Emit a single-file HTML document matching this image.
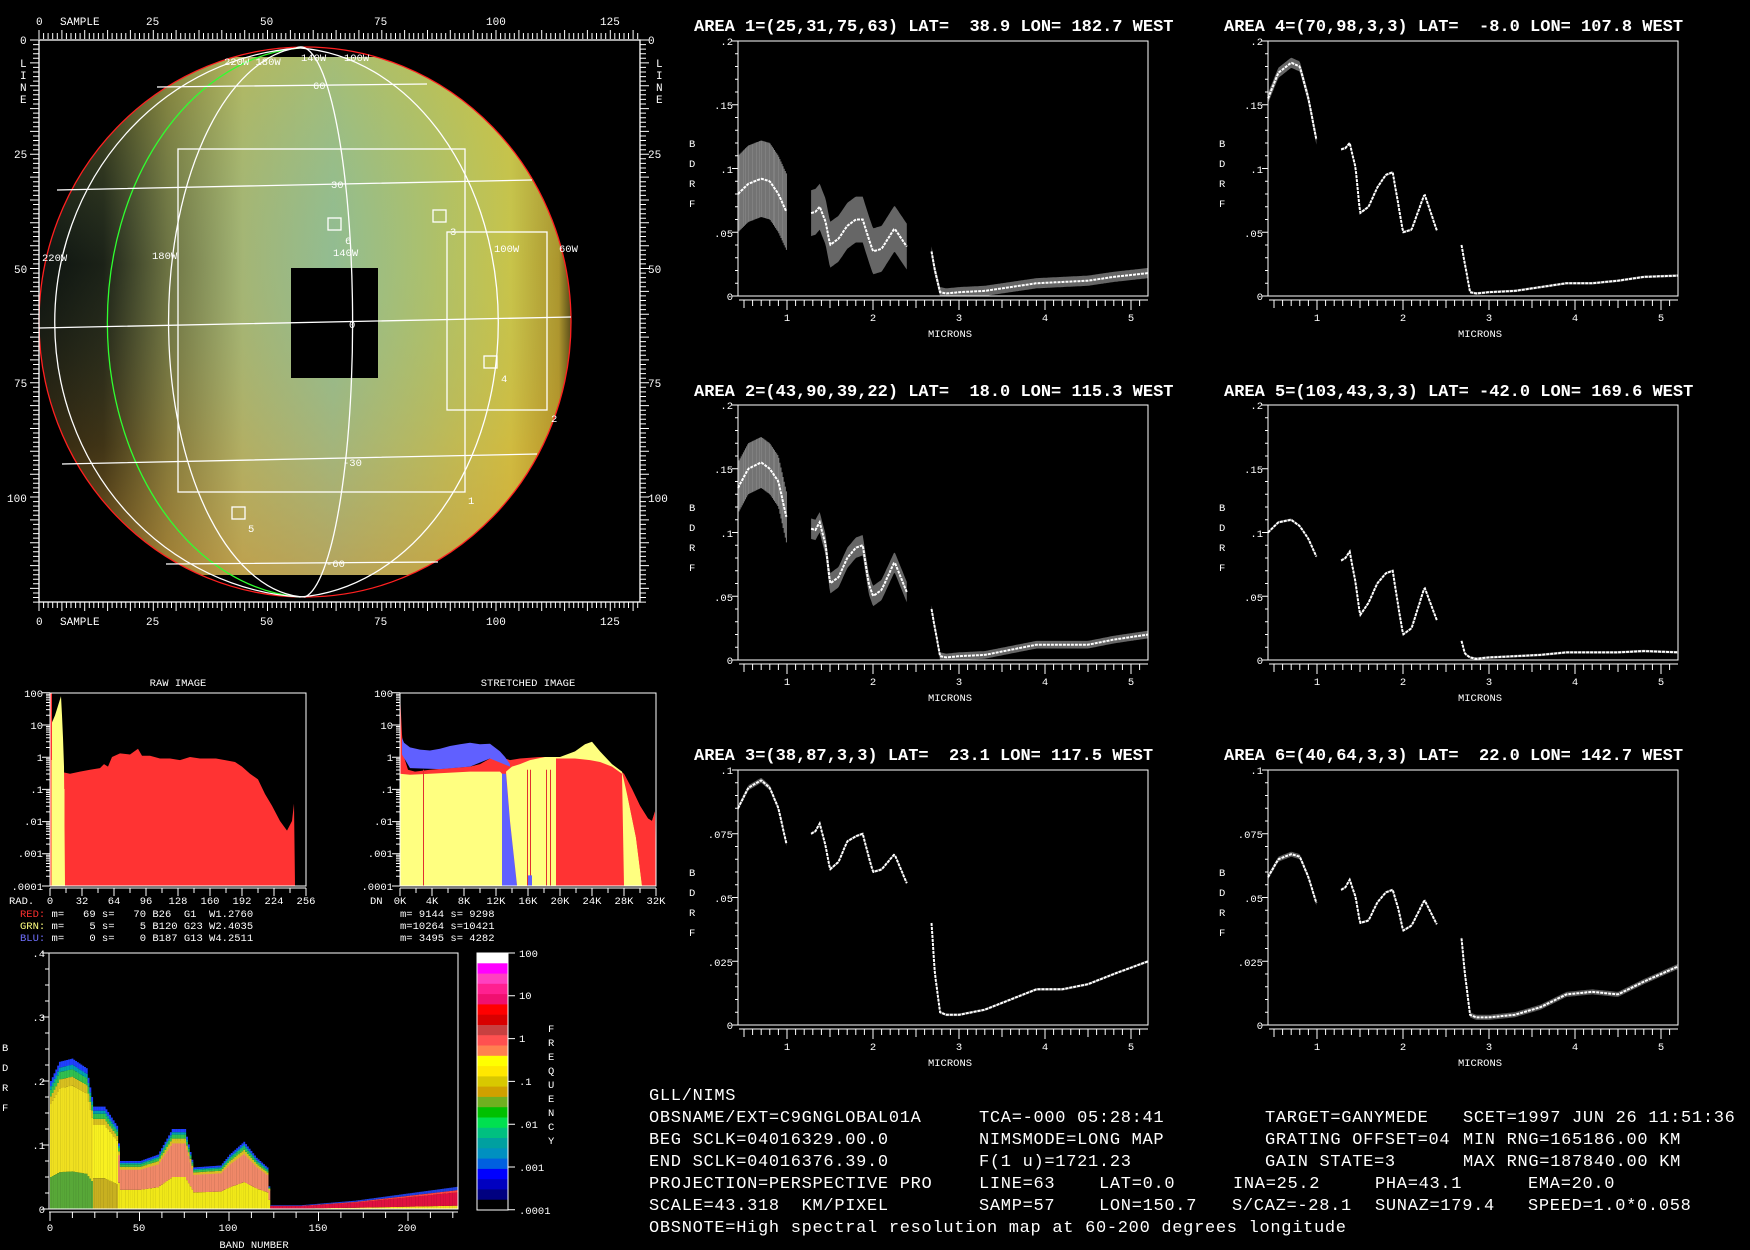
<!DOCTYPE html>
<html><head><meta charset="utf-8"><style>
html,body{margin:0;padding:0;background:#000;width:1750px;height:1250px;overflow:hidden}
svg{display:block}
text{font-family:"Liberation Mono",monospace;fill:#fff;white-space:pre}
.s{font-size:10.5px}
.m{font-size:11px}
.t{font-size:17px;font-weight:bold}
.b{font-size:17px;letter-spacing:0.7px}
</style></head><body>
<svg id="sv" width="1750" height="1250" viewBox="0 0 1750 1250" xmlns="http://www.w3.org/2000/svg">
<defs>
<linearGradient id="ph" gradientUnits="userSpaceOnUse" x1="39" y1="0" x2="575" y2="0">
<stop offset="0" stop-color="#000"/>
<stop offset="0.12" stop-color="#101008"/>
<stop offset="0.24" stop-color="#6a6a38"/>
<stop offset="0.38" stop-color="#a8b470"/>
<stop offset="0.55" stop-color="#94bc90"/>
<stop offset="0.72" stop-color="#b0c068"/>
<stop offset="0.88" stop-color="#d0c440"/>
<stop offset="0.97" stop-color="#b09020"/>
<stop offset="1" stop-color="#302000"/>
</linearGradient>
<linearGradient id="pv" gradientUnits="userSpaceOnUse" x1="0" y1="57" x2="0" y2="575">
<stop offset="0" stop-color="#c8c040" stop-opacity="0.35"/>
<stop offset="0.4" stop-color="#80c0a0" stop-opacity="0.1"/>
<stop offset="0.75" stop-color="#d0a040" stop-opacity="0.25"/>
<stop offset="1" stop-color="#d09030" stop-opacity="0.55"/>
</linearGradient>
<clipPath id="pc"><ellipse cx="305" cy="322" rx="266" ry="275"/></clipPath>
</defs>
<rect width="1750" height="1250" fill="#000"/>

<g clip-path="url(#pc)">
<rect x="39" y="57" width="540" height="518" fill="url(#ph)"/>
<rect x="39" y="57" width="540" height="518" fill="url(#pv)"/>
</g>
<rect x="291" y="268" width="87" height="110" fill="#000"/>
<g fill="none" stroke-width="1.3">
<ellipse cx="305" cy="322" rx="266" ry="275" stroke="#ff2020"/>
<path d="M300 48 A205 275 0 0 0 300 597" stroke="#30ff30"/>
<path d="M300 48 A261 275 0 0 0 300 597" stroke="#fff"/>
<path d="M296 48 A139 275 0 0 0 305 597" stroke="#fff"/>
<path d="M296 48 A52 275 0 0 1 305 597" stroke="#fff"/>
<path d="M300 48 A211 275 0 0 1 300 597" stroke="#fff"/>
<path d="M157 87 L427 84 M57 190 L532 180 M39 328 L571 317 M62 464 L537 454 M166 564 L438 562" stroke="#fff"/>
<rect x="178" y="149" width="287" height="343" stroke="#fff"/>
<rect x="447" y="232" width="100" height="178" stroke="#fff"/>
<rect x="328" y="218" width="13" height="12" stroke="#fff"/>
<rect x="433" y="210" width="13" height="12" stroke="#fff"/>
<rect x="484" y="356" width="13" height="12" stroke="#fff"/>
<rect x="232" y="507" width="13" height="12" stroke="#fff"/>
<rect x="39" y="40" width="601" height="562" stroke="#fff"/>
</g>
<g class="s">
<text x="224" y="65">220W 180W</text><text x="301" y="61">140W</text><text x="344" y="61">100W</text>
<text x="313" y="89">60</text><text x="331" y="188">30</text><text x="345" y="244">6</text>
<text x="333" y="256">140W</text><text x="349" y="328">0</text><text x="450" y="235">3</text>
<text x="494" y="252">100W</text><text x="559" y="252">60W</text><text x="42" y="261">220W</text>
<text x="152" y="259">180W</text><text x="501" y="382">4</text><text x="551" y="422">2</text>
<text x="343" y="466">-30</text><text x="468" y="504">1</text><text x="248" y="532">5</text><text x="326" y="567">-60</text>
</g>
<g class="m">
<text x="36" y="25">0</text><text x="60" y="25">SAMPLE</text><text x="146" y="25">25</text><text x="260" y="25">50</text><text x="374" y="25">75</text><text x="486" y="25">100</text><text x="600" y="25">125</text>
<text x="36" y="625">0</text><text x="60" y="625">SAMPLE</text><text x="146" y="625">25</text><text x="260" y="625">50</text><text x="374" y="625">75</text><text x="486" y="625">100</text><text x="600" y="625">125</text>
<text x="20" y="44">0</text><text x="14" y="158">25</text><text x="14" y="273">50</text><text x="14" y="387">75</text><text x="7" y="502">100</text>
<text x="20" y="67">L</text><text x="20" y="79">I</text><text x="20" y="91">N</text><text x="20" y="103">E</text>
<text x="648" y="44">0</text><text x="648" y="158">25</text><text x="648" y="273">50</text><text x="648" y="387">75</text><text x="648" y="502">100</text>
<text x="656" y="67">L</text><text x="656" y="79">I</text><text x="656" y="91">N</text><text x="656" y="103">E</text>
</g>
<g id="maxis" stroke="#fff" stroke-width="1"></g>

<g id="hist"></g>
<g class="s">
<text x="178" y="686" text-anchor="middle">RAW IMAGE</text>
<text x="528" y="686" text-anchor="middle">STRETCHED IMAGE</text>
<text x="43" y="697" text-anchor="end">100</text><text x="43" y="729" text-anchor="end">10</text><text x="43" y="761" text-anchor="end">1</text><text x="43" y="793" text-anchor="end">.1</text><text x="43" y="825" text-anchor="end">.01</text><text x="43" y="857" text-anchor="end">.001</text><text x="43" y="890" text-anchor="end">.0001</text>
<text x="393" y="697" text-anchor="end">100</text><text x="393" y="729" text-anchor="end">10</text><text x="393" y="761" text-anchor="end">1</text><text x="393" y="793" text-anchor="end">.1</text><text x="393" y="825" text-anchor="end">.01</text><text x="393" y="857" text-anchor="end">.001</text><text x="393" y="890" text-anchor="end">.0001</text>
<text x="9" y="904">RAD.</text>
<text x="50" y="904" text-anchor="middle">0</text><text x="82" y="904" text-anchor="middle">32</text><text x="114" y="904" text-anchor="middle">64</text><text x="146" y="904" text-anchor="middle">96</text><text x="178" y="904" text-anchor="middle">128</text><text x="210" y="904" text-anchor="middle">160</text><text x="242" y="904" text-anchor="middle">192</text><text x="274" y="904" text-anchor="middle">224</text><text x="306" y="904" text-anchor="middle">256</text>
<text x="370" y="904">DN</text>
<text x="400" y="904" text-anchor="middle">0K</text><text x="432" y="904" text-anchor="middle">4K</text><text x="464" y="904" text-anchor="middle">8K</text><text x="496" y="904" text-anchor="middle">12K</text><text x="528" y="904" text-anchor="middle">16K</text><text x="560" y="904" text-anchor="middle">20K</text><text x="592" y="904" text-anchor="middle">24K</text><text x="624" y="904" text-anchor="middle">28K</text><text x="656" y="904" text-anchor="middle">32K</text>
<text x="20" y="917"><tspan fill="#ff3030">RED:</tspan> m=   69 s=   70 B26  G1  W1.2760</text>
<text x="20" y="929"><tspan fill="#ffff80">GRN:</tspan> m=    5 s=    5 B120 G23 W2.4035</text>
<text x="20" y="941"><tspan fill="#7070ff">BLU:</tspan> m=    0 s=    0 B187 G13 W4.2511</text>
<text x="400" y="917">m= 9144 s= 9298</text>
<text x="400" y="929">m=10264 s=10421</text>
<text x="400" y="941">m= 3495 s= 4282</text>
</g>

<g id="simg"></g>
<g id="cbar"></g>
<g class="s">
<text x="45" y="957" text-anchor="end">.4</text><text x="45" y="1021" text-anchor="end">.3</text><text x="45" y="1085" text-anchor="end">.2</text><text x="45" y="1149" text-anchor="end">.1</text><text x="45" y="1213" text-anchor="end">0</text>
<text x="2" y="1051">B</text><text x="2" y="1071">D</text><text x="2" y="1091">R</text><text x="2" y="1111">F</text>
<text x="50" y="1231" text-anchor="middle">0</text><text x="139" y="1231" text-anchor="middle">50</text><text x="228" y="1231" text-anchor="middle">100</text><text x="318" y="1231" text-anchor="middle">150</text><text x="407" y="1231" text-anchor="middle">200</text>
<text x="254" y="1248" text-anchor="middle">BAND NUMBER</text>
<text x="519" y="957">100</text><text x="519" y="999">10</text><text x="519" y="1042">1</text><text x="519" y="1085">.1</text><text x="519" y="1128">.01</text><text x="519" y="1171">.001</text><text x="519" y="1214">.0001</text>
<text x="548" y="1032">F</text><text x="548" y="1046">R</text><text x="548" y="1060">E</text><text x="548" y="1074">Q</text><text x="548" y="1088">U</text><text x="548" y="1102">E</text><text x="548" y="1116">N</text><text x="548" y="1130">C</text><text x="548" y="1144">Y</text>
</g>

<g id="spec"></g>
<g class="t">
<text x="694" y="31">AREA 1=(25,31,75,63) LAT=  38.9 LON= 182.7 WEST</text>
<text x="1224" y="31">AREA 4=(70,98,3,3) LAT=  -8.0 LON= 107.8 WEST</text>
<text x="694" y="396">AREA 2=(43,90,39,22) LAT=  18.0 LON= 115.3 WEST</text>
<text x="1224" y="396">AREA 5=(103,43,3,3) LAT= -42.0 LON= 169.6 WEST</text>
<text x="694" y="760">AREA 3=(38,87,3,3) LAT=  23.1 LON= 117.5 WEST</text>
<text x="1224" y="760">AREA 6=(40,64,3,3) LAT=  22.0 LON= 142.7 WEST</text>
</g>
<g class="s">
<text x="733" y="45" text-anchor="end">.2</text><text x="733" y="109" text-anchor="end">.15</text><text x="733" y="173" text-anchor="end">.1</text><text x="733" y="237" text-anchor="end">.05</text><text x="733" y="300" text-anchor="end">0</text>
<text x="689" y="147">B</text><text x="689" y="167">D</text><text x="689" y="187">R</text><text x="689" y="207">F</text>
<text x="787" y="321" text-anchor="middle">1</text><text x="873" y="321" text-anchor="middle">2</text><text x="959" y="321" text-anchor="middle">3</text><text x="1045" y="321" text-anchor="middle">4</text><text x="1131" y="321" text-anchor="middle">5</text>
<text x="950" y="337" text-anchor="middle">MICRONS</text>
<text x="1263" y="45" text-anchor="end">.2</text><text x="1263" y="109" text-anchor="end">.15</text><text x="1263" y="173" text-anchor="end">.1</text><text x="1263" y="237" text-anchor="end">.05</text><text x="1263" y="300" text-anchor="end">0</text>
<text x="1219" y="147">B</text><text x="1219" y="167">D</text><text x="1219" y="187">R</text><text x="1219" y="207">F</text>
<text x="1317" y="321" text-anchor="middle">1</text><text x="1403" y="321" text-anchor="middle">2</text><text x="1489" y="321" text-anchor="middle">3</text><text x="1575" y="321" text-anchor="middle">4</text><text x="1661" y="321" text-anchor="middle">5</text>
<text x="1480" y="337" text-anchor="middle">MICRONS</text>
<text x="733" y="409" text-anchor="end">.2</text><text x="733" y="473" text-anchor="end">.15</text><text x="733" y="537" text-anchor="end">.1</text><text x="733" y="601" text-anchor="end">.05</text><text x="733" y="664" text-anchor="end">0</text>
<text x="689" y="511">B</text><text x="689" y="531">D</text><text x="689" y="551">R</text><text x="689" y="571">F</text>
<text x="787" y="685" text-anchor="middle">1</text><text x="873" y="685" text-anchor="middle">2</text><text x="959" y="685" text-anchor="middle">3</text><text x="1045" y="685" text-anchor="middle">4</text><text x="1131" y="685" text-anchor="middle">5</text>
<text x="950" y="701" text-anchor="middle">MICRONS</text>
<text x="1263" y="409" text-anchor="end">.2</text><text x="1263" y="473" text-anchor="end">.15</text><text x="1263" y="537" text-anchor="end">.1</text><text x="1263" y="601" text-anchor="end">.05</text><text x="1263" y="664" text-anchor="end">0</text>
<text x="1219" y="511">B</text><text x="1219" y="531">D</text><text x="1219" y="551">R</text><text x="1219" y="571">F</text>
<text x="1317" y="685" text-anchor="middle">1</text><text x="1403" y="685" text-anchor="middle">2</text><text x="1489" y="685" text-anchor="middle">3</text><text x="1575" y="685" text-anchor="middle">4</text><text x="1661" y="685" text-anchor="middle">5</text>
<text x="1480" y="701" text-anchor="middle">MICRONS</text>
<text x="733" y="774" text-anchor="end">.1</text><text x="733" y="838" text-anchor="end">.075</text><text x="733" y="902" text-anchor="end">.05</text><text x="733" y="966" text-anchor="end">.025</text><text x="733" y="1029" text-anchor="end">0</text>
<text x="689" y="876">B</text><text x="689" y="896">D</text><text x="689" y="916">R</text><text x="689" y="936">F</text>
<text x="787" y="1050" text-anchor="middle">1</text><text x="873" y="1050" text-anchor="middle">2</text><text x="959" y="1050" text-anchor="middle">3</text><text x="1045" y="1050" text-anchor="middle">4</text><text x="1131" y="1050" text-anchor="middle">5</text>
<text x="950" y="1066" text-anchor="middle">MICRONS</text>
<text x="1263" y="774" text-anchor="end">.1</text><text x="1263" y="838" text-anchor="end">.075</text><text x="1263" y="902" text-anchor="end">.05</text><text x="1263" y="966" text-anchor="end">.025</text><text x="1263" y="1029" text-anchor="end">0</text>
<text x="1219" y="876">B</text><text x="1219" y="896">D</text><text x="1219" y="916">R</text><text x="1219" y="936">F</text>
<text x="1317" y="1050" text-anchor="middle">1</text><text x="1403" y="1050" text-anchor="middle">2</text><text x="1489" y="1050" text-anchor="middle">3</text><text x="1575" y="1050" text-anchor="middle">4</text><text x="1661" y="1050" text-anchor="middle">5</text>
<text x="1480" y="1066" text-anchor="middle">MICRONS</text>
</g>

<g class="b">
<text x="649" y="1100">GLL/NIMS</text>
<text x="649" y="1122">OBSNAME/EXT=C9GNGLOBAL01A</text><text x="979" y="1122">TCA=-000 05:28:41</text><text x="1265" y="1122">TARGET=GANYMEDE</text><text x="1463" y="1122">SCET=1997 JUN 26 11:51:36</text>
<text x="649" y="1144">BEG SCLK=04016329.00.0</text><text x="979" y="1144">NIMSMODE=LONG MAP</text><text x="1265" y="1144">GRATING OFFSET=04</text><text x="1463" y="1144">MIN RNG=165186.00 KM</text>
<text x="649" y="1166">END SCLK=04016376.39.0</text><text x="979" y="1166">F(1 u)=1721.23</text><text x="1265" y="1166">GAIN STATE=3</text><text x="1463" y="1166">MAX RNG=187840.00 KM</text>
<text x="649" y="1188">PROJECTION=PERSPECTIVE PRO</text><text x="979" y="1188">LINE=63</text><text x="1099" y="1188">LAT=0.0</text><text x="1233" y="1188">INA=25.2</text><text x="1375" y="1188">PHA=43.1</text><text x="1528" y="1188">EMA=20.0</text>
<text x="649" y="1210">SCALE=43.318  KM/PIXEL</text><text x="979" y="1210">SAMP=57</text><text x="1099" y="1210">LON=150.7</text><text x="1232" y="1210">S/CAZ=-28.1</text><text x="1375" y="1210">SUNAZ=179.4</text><text x="1528" y="1210">SPEED=1.0*0.058</text>
<text x="649" y="1232">OBSNOTE=High spectral resolution map at 60-200 degrees longitude</text>
</g>
</svg>
<script>
(function(){
var NS="http://www.w3.org/2000/svg";
function el(p,t,a){var e=document.createElementNS(NS,t);for(var k in a)e.setAttribute(k,a[k]);p.appendChild(e);return e;}
function G(id){return document.getElementById(id);}
var ma=G("maxis"),d="";
for(var s=0;s<=131;s++){var x=39+s*4.57;var L=(s%5==0)?9:6;d+="M"+x.toFixed(1)+" 39v-"+L+"M"+x.toFixed(1)+" 602v"+L;}
for(var l=0;l<=123;l++){var y=40+l*4.57;var L=(l%5==0)?9:6;d+="M39 "+y.toFixed(1)+"h-"+L+"M640 "+y.toFixed(1)+"h"+L;}
el(ma,"path",{d:d,fill:"none"});
var h=G("hist");
function hy(v){var y=757-32*Math.log10(v);return Math.min(886,y);}
function poly(pts,fill,par){var s="";pts.forEach(function(p){s+=p[0]+","+hy(p[1]).toFixed(1)+" ";});el(par||h,"polygon",{points:s,fill:fill});}
function withBase(pts){var a=pts.slice();a.unshift([pts[0][0],1e-9]);a.push([pts[pts.length-1][0],1e-9]);return a;}
var RED="#ff3333",YEL="#ffff80",BLU="#6060ff";
poly(withBase([[51,100],[53,3],[55,.5],[60,.35],[70,.3],[80,.35],[90,.4],[100,.45],[104,.6],[108,.5],[112,1],[120,1.3],[130,1.2],[138,1.8],[142,1.1],[150,1.1],[160,.9],[170,.9],[180,.8],[190,1],[200,.9],[210,.9],[216,.9],[225,.8],[235,.7],[242,.5],[250,.3],[258,.2],[265,.07],[272,.03],[280,.01],[287,.005],[292,.01],[294,.035],[295,.0001]]),RED);
poly(withBase([[50,10],[52,12],[55,20],[58,40],[61,80],[62,20],[63,4],[64,.5],[65,.0001]]),YEL);
el(h,"rect",{x:50,y:693,width:2,height:193,fill:RED});
el(h,"rect",{x:51.5,y:760,width:1,height:126,fill:YEL});
el(h,"rect",{x:63.5,y:789,width:1,height:97,fill:YEL});
poly(withBase([[400,100],[402,5],[404,1],[408,.4],[415,.35],[430,.4],[450,.45],[470,.5],[480,.6],[490,.9],[496,1.6],[500,1],[510,.8],[520,.9],[540,1],[560,1],[580,.9],[600,.7],[615,.5],[624,.3],[632,.1],[640,.03],[648,.012],[652,.01],[655,.02],[656,.0001]]),RED);
poly([[402,4],[404,2.8],[410,2],[420,1.7],[430,1.6],[440,1.8],[450,2.2],[460,2.5],[470,2.8],[480,2.5],[490,2.6],[500,1.5],[505,1],[510,.6],[510,.5],[490,.9],[470,.5],[440,.42],[410,.45],[402,1.2]],BLU);
poly([[400,1e-9],[400,.3],[410,.28],[430,.3],[470,.35],[500,.35],[502,.3],[502,1e-9]],YEL);
poly([[502,.3],[506,.3],[510,.01],[517,.0001],[517,1e-9],[502,1e-9]],BLU);
poly([[506,.35],[512,.5],[520,.6],[530,.8],[545,1],[560,1],[575,1.5],[585,2.5],[592,3],[600,1.5],[612,.6],[622,.35],[628,.05],[636,.003],[642,.0001],[642,1e-9],[517,1e-9],[517,.0001],[510,.01]],YEL);
poly([[556,1e-9],[556,.9],[575,.9],[590,.8],[600,.7],[612,.5],[622,.3],[624,1e-9]],RED);
poly([[624,.3],[632,.1],[640,.03],[648,.012],[652,.01],[655,.02],[656,1e-9],[642,1e-9],[636,.003],[628,.05]],RED);
[423,527,530,546,550].forEach(function(x){el(h,"rect",{x:x,y:hy(.4),width:1,height:886-hy(.4),fill:"#e03030"});});
el(h,"rect",{x:528,y:hy(.0002),width:4,height:886-hy(.0002),fill:BLU});
[[50,306],[400,656]].forEach(function(b){
 el(h,"rect",{x:b[0],y:693,width:b[1]-b[0],height:193,fill:"none",stroke:"#fff","stroke-width":1});
 var dd="";
 for(var dec=0;dec<6;dec++){for(var k=1;k<=10;k++){var y=886-dec*32.2-32.2*Math.log10(k);dd+="M"+b[0]+" "+y.toFixed(1)+"h-"+(k==1||k==10?8:4);}}
 for(var i=0;i<=16;i++){var x=b[0]+i*16;dd+="M"+x+" 888v"+(i%2==0?8:5);}
 dd+="M"+b[0]+" 888H"+b[1];
 el(h,"path",{d:dd,stroke:"#fff",fill:"none"});
});
var si=G("simg");
var TP=[[0,.2],[5,.23],[12,.235],[20,.22],[24,.16],[30,.16],[37,.13],[39,.075],[50,.075],[60,.085],[68,.125],[75,.125],[80,.065],[95,.068],[100,.085],[108,.105],[115,.08],[121,.065],[123,.006],[140,.006],[170,.013],[228,.035]];
function interp(P,x){for(var i=0;i<P.length-1;i++){if(x>=P[i][0]&&x<=P[i+1][0]){var t=(x-P[i][0])/(P[i+1][0]-P[i][0]);return P[i][1]+t*(P[i+1][1]-P[i][1]);}}return P[P.length-1][1];}
function sy(v){return 1209-v*640;}
for(var b=0;b<228;b++){
 var x=50+b*1.79,T=interp(TP,b);
 function band(a,c,col){el(si,"rect",{x:x.toFixed(2),y:sy(c*T).toFixed(1),width:1.9,height:((c-a)*T*640).toFixed(1),fill:col});}
 if(b<123){
  if(b<24){band(0,.25,"#58a838");band(.25,.82,"#f0e020");}
  else if(b<38){band(0,.3,"#c8b020");band(.3,.82,"#f8f020");}
  else{band(0,.4,"#f0e818");band(.4,.85,"#f08868");}
  band(.82,.88,"#d8c020");band(.88,.93,"#30c050");band(.93,.96,"#00a0b0");band(.96,1,"#2040ff");
 } else {
  band(0,.15,"#f0e020");band(.15,.75,"#e01040");band(.75,.85,"#ff4040");band(.85,1,"#2040e0");
 }
}
el(si,"rect",{x:49,y:953,width:409,height:256,fill:"none",stroke:"#fff"});
var dd="";for(var i=0;i<=16;i++){var y=1209-i*16;dd+="M49 "+y+"h-"+(i%4==0?7:4);}
for(var i=0;i<=18;i++){var x=50+i*12.5*1.79;dd+="M"+x.toFixed(1)+" 1212v"+(i%4==0?9:6);}
dd+="M49 1212H458";
el(si,"path",{d:dd,stroke:"#fff",fill:"none"});
var cb=G("cbar"),cols=["#ffffff","#ff00ff","#ff40c0","#ff2090","#f01070","#ff0000","#d80000","#c84040","#ff5050","#ff8050","#ffff00","#ffe800","#d8c800","#d0a000","#70b020","#00c000","#00e050","#00c080","#00a0a0","#0090c0","#0060e0","#0000ff","#0000c0","#000080","#000000"];
var hh=257/cols.length;cols.forEach(function(c,i){el(cb,"rect",{x:477,y:(953+i*hh).toFixed(1),width:31,height:(hh+0.5).toFixed(1),fill:c});});
el(cb,"rect",{x:477,y:953,width:31,height:257,fill:"none",stroke:"#fff"});
var cd="";for(var i=0;i<=6;i++){var y=953+i*42.8;cd+="M508 "+y.toFixed(1)+"h7";}
el(cb,"path",{d:cd,stroke:"#fff"});
var sp=G("spec");
var L1=[.43,.55,.7,.8,.9,1.0],L2=[1.28,1.33,1.38,1.45,1.5,1.6,1.7,1.8,1.88,1.95,2.0,2.1,2.25,2.4],L3=[2.68,2.72,2.78,2.85,3.0,3.3,3.6,3.9,4.2,4.5,4.8,5.2];
var A=[
 {x0:738,y0:41,ym:.2,s:[[.08,.088,.092,.09,.08,.065],[.065,.066,.07,.058,.04,.045,.055,.06,.06,.045,.035,.037,.053,.038],[.035,.02,.003,.002,.003,.004,.007,.01,.011,.012,.015,.018]],e:[.03,.018,.004]},
 {x0:1268,y0:41,ym:.2,s:[[.155,.175,.183,.18,.155,.12],[.115,.116,.12,.1,.065,.07,.085,.095,.097,.07,.05,.052,.08,.05],[.04,.025,.003,.002,.003,.004,.007,.01,.01,.012,.015,.016]],e:[.004,.001,.001]},
 {x0:738,y0:405,ym:.2,s:[[.135,.15,.155,.15,.14,.11],[.103,.102,.108,.09,.06,.065,.08,.088,.09,.06,.05,.055,.077,.052],[.04,.025,.003,.002,.003,.004,.008,.012,.012,.012,.016,.02]],e:[.02,.008,.003]},
 {x0:1268,y0:405,ym:.2,s:[[.1,.108,.11,.105,.095,.08],[.078,.08,.085,.06,.035,.045,.06,.068,.07,.04,.02,.025,.057,.03],[.015,.005,.002,.001,.002,.003,.004,.006,.006,.006,.007,.006]],e:[.001,.001,.001]},
 {x0:738,y0:770,ym:.1,s:[[.085,.093,.096,.093,.085,.07],[.075,.076,.079,.07,.061,.064,.072,.074,.075,.066,.06,.061,.067,.055],[.04,.02,.005,.004,.004,.006,.01,.014,.014,.016,.02,.025]],e:[.001,.0005,.0005]},
 {x0:1268,y0:770,ym:.1,s:[[.058,.065,.067,.066,.058,.047],[.053,.054,.057,.05,.04,.041,.048,.052,.053,.045,.037,.039,.049,.039],[.034,.02,.004,.003,.003,.004,.007,.012,.013,.012,.017,.023]],e:[.001,.0005,.001]}
];
A.forEach(function(a){
 var x0=a.x0,y0=a.y0,H=255,W=410;
 function X(l){return x0+49+(l-1)*86;}function Y(v){return y0+H-v/a.ym*H;}
 [L1,L2,L3].forEach(function(Ls,si2){
  var P=Ls.map(function(l,i){return[l,a.s[si2][i]];}),e=a.e[si2];
  var lo=Ls[0],hi=Ls[Ls.length-1],up="",dn="",ln="",hatch="";
  for(var l=lo;l<=hi+1e-6;l+=0.0125){var v=interp(P,l);var x=X(l).toFixed(1);
   up+=x+","+Y(v+e).toFixed(1)+" ";dn=x+","+Y(Math.max(0,v-e)).toFixed(1)+" "+dn;ln+=x+","+Y(v).toFixed(1)+" ";
   hatch+="M"+x+" "+Y(v+e).toFixed(1)+"V"+Y(Math.max(0,v-e)).toFixed(1);}
  if(e>=.01&&si2==0){el(sp,"path",{d:hatch,stroke:"#808080","stroke-width":1});}
  else el(sp,"polygon",{points:up+dn,fill:e>=.003?"#666":"#555"});
  el(sp,"polyline",{points:ln,fill:"none",stroke:"#fff","stroke-width":2,"stroke-dasharray":"3 1"});
 });
 el(sp,"rect",{x:x0,y:y0,width:W,height:H,fill:"none",stroke:"#fff"});
 var dd="";for(var i=0;i<=20;i++){var y=y0+i*H/20;dd+="M"+x0+" "+y.toFixed(1)+"h-"+(i%5==0?6:3);}
 dd+="M"+(x0+1)+" "+(y0+H+4)+"H"+(x0+W);
 for(var t=5;t<=52;t++){var l=t/10,x=X(l);if(x<x0||x>x0+W)continue;dd+="M"+x.toFixed(1)+" "+(y0+H+4)+"v"+(t%10==0?10:(t%5==0?8:6));}
 el(sp,"path",{d:dd,stroke:"#fff",fill:"none"});
});
})();
</script>
</body></html>
